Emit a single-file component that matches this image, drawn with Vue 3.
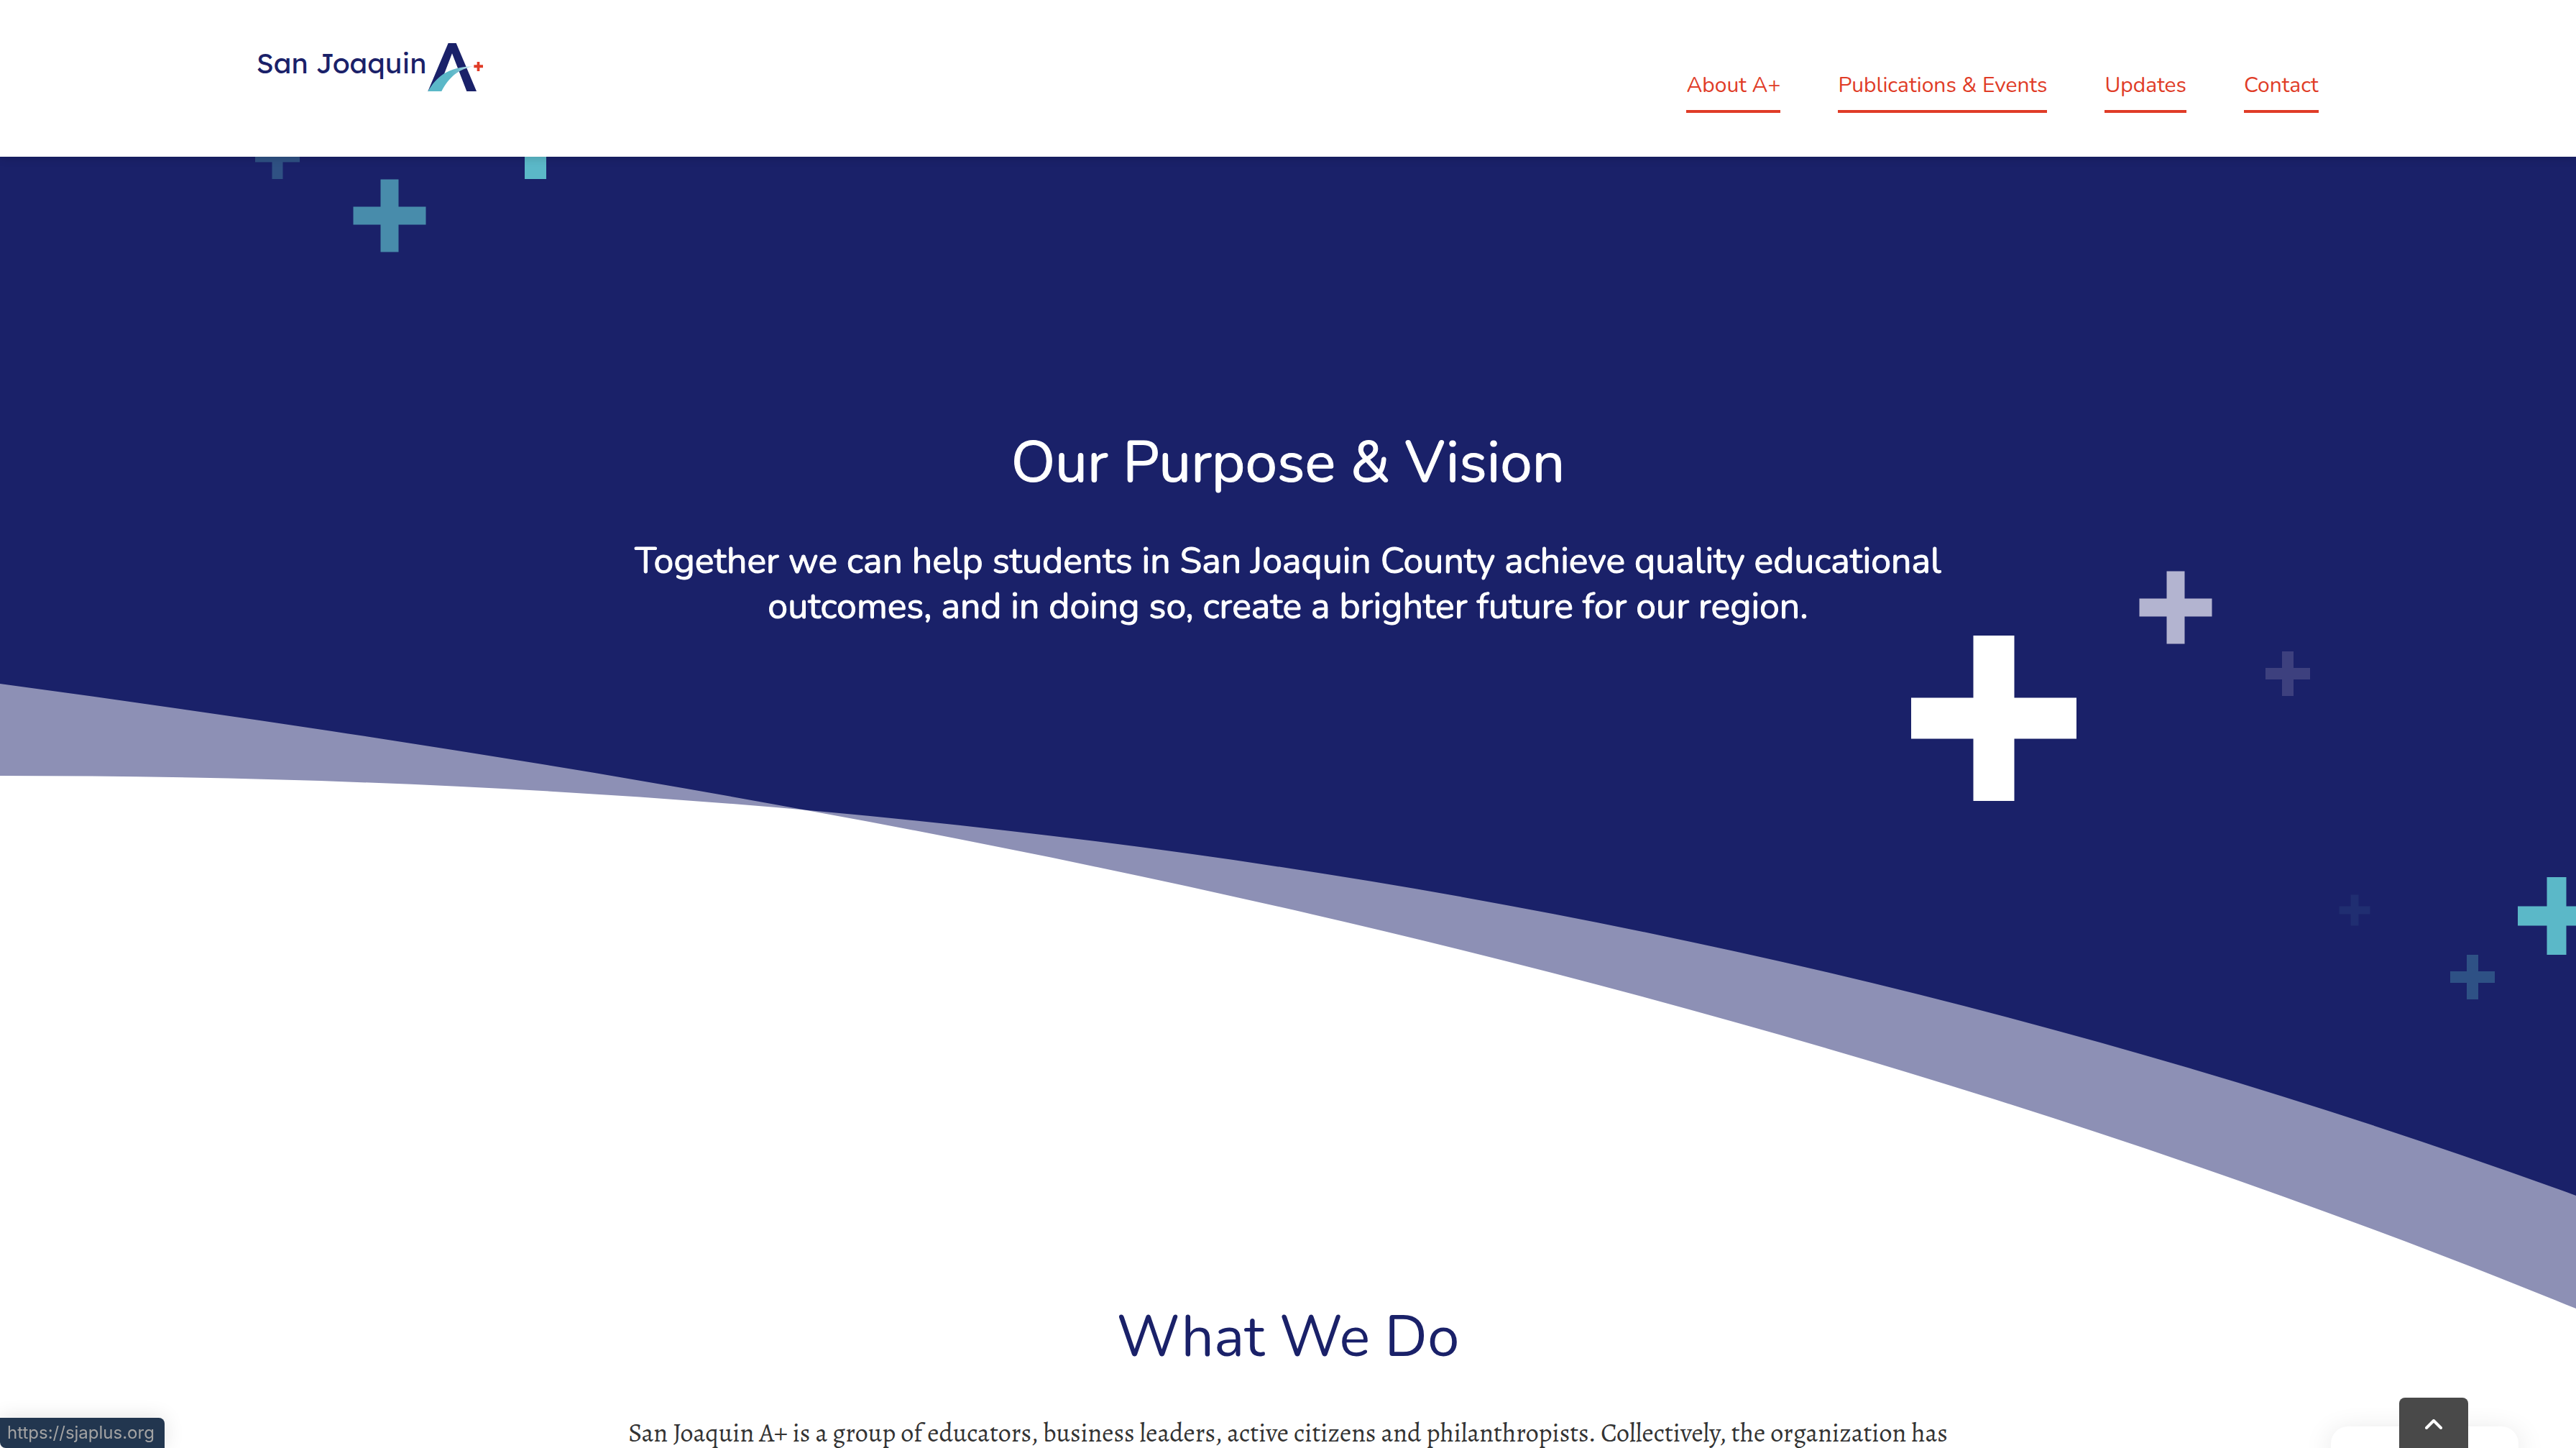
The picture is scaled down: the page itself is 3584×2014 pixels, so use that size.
<script setup>
const links = ['About A+', 'Publications & Events', 'Updates', 'Contact']

// Decorative plus signs: centre, overall size, bar thickness, colour
const pluses = [
  { x: 386, y: 0, size: 62, bar: 15, color: '#2f5183' },
  { x: 542, y: 82, size: 101, bar: 25, color: '#488cab' },
  { x: 745, y: -23, size: 108, bar: 30, color: '#5bb8c8' },
  { x: 2774, y: 781, size: 230, bar: 57, color: '#ffffff' },
  { x: 3027, y: 627, size: 101, bar: 25, color: '#b3b4d0' },
  { x: 3183, y: 719, size: 62, bar: 16, color: '#3d407e' },
  { x: 3276, y: 1048, size: 43, bar: 11, color: '#202e71' },
  { x: 3440, y: 1141, size: 62, bar: 16, color: '#2e5185' },
  { x: 3557, y: 1056, size: 108, bar: 27, color: '#5bb8c8' }
]

function plusPath({ x, y, size, bar }) {
  const s = size / 2
  const b = bar / 2
  return `M${x - b} ${y - s}h${bar}v${s - b}h${s - b}v${bar}h${b - s}v${s - b}h${-bar}v${b - s}h${b - s}v${-bar}h${s - b}z`
}
</script>

<template>
  <div class="page">
    <header class="header">
      <a class="logo" href="#" aria-label="San Joaquin A+">
        <span class="logo-text">San Joaquin</span>
        <svg class="logo-mark" viewBox="795 60 231 201" aria-hidden="true">
          <defs>
            <linearGradient id="swoosh" x1="0" x2="1" y1="0" y2="0">
              <stop offset="0.5" stop-color="#5bb8c8" />
              <stop offset="0.66" stop-color="#74bfd0" />
              <stop offset="0.82" stop-color="#a3d3de" />
              <stop offset="1" stop-color="#eaf6f8" />
            </linearGradient>
          </defs>
          <path fill="#1a2169" d="M796 261 881 60H914L999 261H958L897 103 836 261Z" />
          <path fill="url(#swoosh)" d="M796 261C832 202 874 160 988 156C922 170 886 200 853 261Z" />
          <path fill="#e03c27" d="M1001 138h11v13h14v12h-14v14h-11v-14h-13v-12h13z" />
        </svg>
      </a>
      <nav class="nav" aria-label="Main">
        <a v-for="link in links" :key="link" href="#">{{ link }}</a>
      </nav>
    </header>

    <main>
      <section class="hero">
        <svg class="hero-art" viewBox="0 0 3584 1602" preserveAspectRatio="none" aria-hidden="true">
          <defs>
            <clipPath id="steep">
              <path d="M0 0H3584V1602C2389 1116 1195 895 0 733Z" />
            </clipPath>
          </defs>
          <path fill="#8d90b5" d="M0 0H3584V1602C2389 1116 1195 895 0 733Z" />
          <path fill="#8d90b5" d="M0 0H3584V1445C2389 1009 1195 861 0 861Z" />
          <path fill="#1a2169" clip-path="url(#steep)" d="M0 0H3584V1445C2389 1009 1195 861 0 861Z" />
          <path v-for="(plus, i) in pluses" :key="i" :d="plusPath(plus)" :fill="plus.color" />
        </svg>
        <div class="hero-copy">
          <h1>Our Purpose &amp; Vision</h1>
          <p>
            Together we can help students in San Joaquin County achieve quality educational<br />
            outcomes, and in doing so, create a brighter future for our region.
          </p>
        </div>
      </section>

      <section class="about">
        <h2>What We Do</h2>
        <p>San Joaquin A+ is a group of educators, business leaders, active citizens and philanthropists. Collectively, the organization has</p>
      </section>
    </main>

    <div class="status">https://sjaplus.org</div>
    <div class="card"></div>
    <button class="to-top" type="button" aria-label="Back to top">
      <svg viewBox="0 0 24 14" aria-hidden="true">
        <path d="M2 12 12 2 22 12" fill="none" stroke="#fff" stroke-width="4" stroke-linecap="round" stroke-linejoin="round" />
      </svg>
    </button>
  </div>
</template>

<style>
body {
  margin: 0;
  background: #fff;
}
</style>

<style scoped>
.page {
  min-height: 100vh;
  overflow: hidden;
  font-family: Nunito, Lato, sans-serif;
}

.header {
  position: relative;
  z-index: 1;
  display: flex;
  justify-content: space-between;
  align-items: flex-start;
  height: 218px;
  padding: 0 10%;
  box-sizing: border-box;
  background: #fff;
  box-shadow: 0 2px 12px rgba(0, 0, 0, 0.15);
}

.logo {
  display: flex;
  margin: 60px 0 0 -2px;
  color: #1a2169;
  text-decoration: none;
}

.logo-text {
  width: 239px;
  font-family: Lexend, "Lexend Deca", Nunito, Lato, sans-serif;
  font-size: 39px;
  line-height: 56px;
  white-space: nowrap;
}

.logo-mark {
  width: 77px;
  height: 67px;
}

.nav {
  display: flex;
  gap: 80px;
  margin-top: 99px;
}

.nav a {
  padding-bottom: 14px;
  border-bottom: 4px solid #e03c27;
  color: #e03c27;
  font-size: 30px;
  line-height: 40px;
  text-decoration: none;
}

.hero {
  position: relative;
  height: 1530px;
}

.hero-art {
  position: absolute;
  top: 0;
  left: 0;
  width: 100%;
  height: 1602px;
}

.hero-copy {
  position: relative;
  padding-top: 386px;
  color: #fff;
  text-align: center;
}

h1,
h2 {
  margin: 0;
  font-size: 80px;
  font-weight: 400;
  line-height: 80px;
}

h1,
.hero-copy p {
  -webkit-text-stroke: 1px currentColor;
}

.hero-copy p {
  margin: 65px 0 0;
  font-size: 50px;
  line-height: 63px;
}

.about {
  position: relative;
  padding-top: 72px;
  text-align: center;
}

h2 {
  color: #1a2169;
}

.about p {
  margin: 68px 0 0;
  color: #333;
  font-family: Alegreya, "Liberation Serif", serif;
  font-size: 36px;
  line-height: 50px;
}

.status {
  position: fixed;
  bottom: 0;
  left: 0;
  height: 42px;
  padding: 0 14px 0 10px;
  border-radius: 0 8px 0 8px;
  background: #22364f;
  box-shadow: 0 0 28px rgba(0, 0, 0, 0.12);
  color: #a3a3a3;
  font-family: Inter, sans-serif;
  font-size: 24px;
  line-height: 42px;
}

.card {
  position: fixed;
  right: 80px;
  bottom: 0;
  width: 261px;
  height: 30px;
  border-radius: 24px 24px 0 0;
  background: #fff;
  box-shadow: 0 12px 40px rgba(0, 0, 0, 0.16);
}

.to-top {
  position: fixed;
  right: 150px;
  bottom: 0;
  display: flex;
  justify-content: center;
  width: 96px;
  height: 70px;
  padding: 30px 0 0;
  border: 0;
  border-radius: 8px 8px 0 0;
  background: #494949;
}

.to-top svg {
  width: 24px;
  height: 14px;
}
</style>
